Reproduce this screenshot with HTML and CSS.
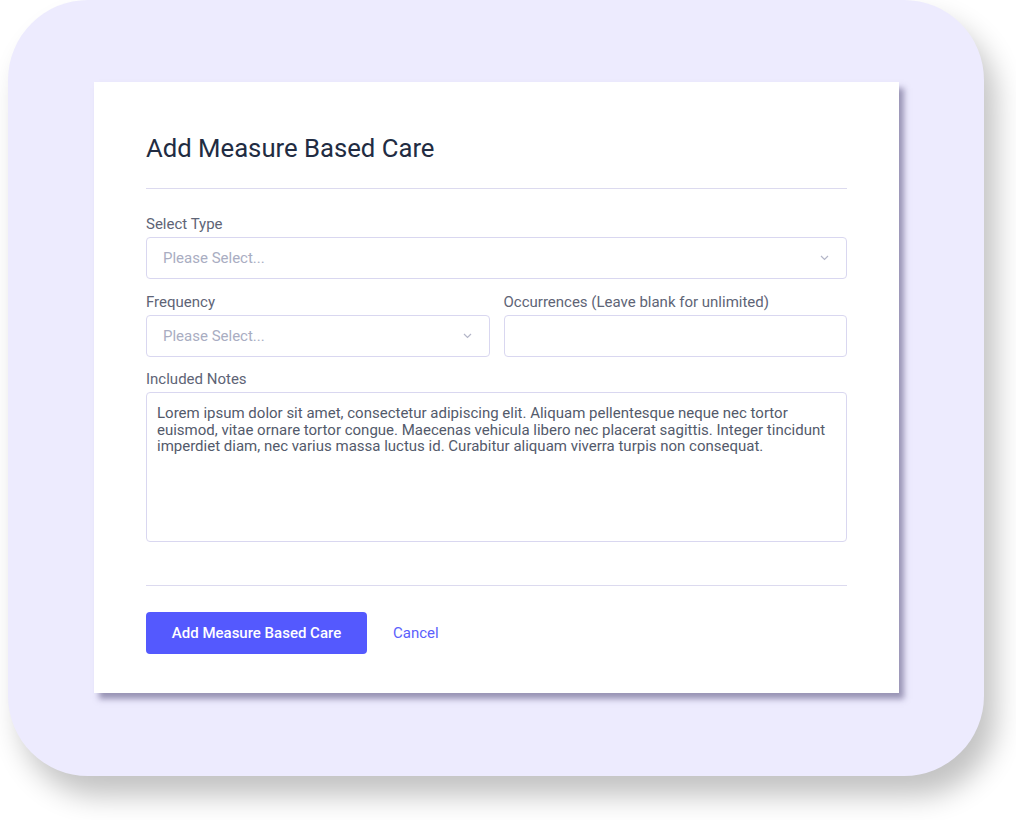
FILE: index.html
```html
<!DOCTYPE html>
<html lang="en">
<head>
<meta charset="utf-8">
<title>Add Measure Based Care</title>
<link rel="stylesheet" href="styles.css">
</head>
<body>
<div class="frame">
  <div class="card">
    <h1 class="title">Add Measure Based Care</h1>
    <hr class="divider">
    <div class="field field-first">
      <label class="label">Select Type</label>
      <div class="select">
        <span class="placeholder">Please Select...</span>
        <svg class="chev" width="9" height="6" viewBox="0 0 9 6"><path d="M1 1l3.5 3.5L8 1" fill="none" stroke="#b4b6c8" stroke-width="1.2"/></svg>
      </div>
    </div>
    <div class="row">
      <div class="field">
        <label class="label">Frequency</label>
        <div class="select">
          <span class="placeholder">Please Select...</span>
          <svg class="chev" width="9" height="6" viewBox="0 0 9 6"><path d="M1 1l3.5 3.5L8 1" fill="none" stroke="#b4b6c8" stroke-width="1.2"/></svg>
        </div>
      </div>
      <div class="field">
        <label class="label">Occurrences (Leave blank for unlimited)</label>
        <div class="input"></div>
      </div>
    </div>
    <div class="field field-notes">
      <label class="label">Included Notes</label>
      <div class="textarea">Lorem ipsum dolor sit amet, consectetur adipiscing elit. Aliquam pellentesque neque nec tortor euismod, vitae ornare tortor congue. Maecenas vehicula libero nec placerat sagittis. Integer tincidunt imperdiet diam, nec varius massa luctus id. Curabitur aliquam viverra turpis non consequat.</div>
    </div>
    <hr class="divider divider-bottom">
    <div class="actions">
      <button class="btn-primary">Add Measure Based Care</button>
      <a class="btn-link">Cancel</a>
    </div>
  </div>
</div>
</body>
</html>
```
FILE: styles.css
```css
* { box-sizing: border-box; }
html, body { margin: 0; padding: 0; background: #ffffff; }
body {
  font-family: Roboto, "Liberation Sans", sans-serif;
  width: 1016px;
  height: 820px;
  overflow: hidden;
}
.frame {
  margin-left: 8px;
  width: 976px;
  height: 776px;
  background: #edebfe;
  border-radius: 80px;
  box-shadow: 12px 20px 28px rgba(0, 0, 0, 0.24);
  padding-top: 82px;
  padding-left: 86px;
}
.card {
  width: 805px;
  height: 611px;
  background: #ffffff;
  box-shadow: 5px 6px 6px rgba(70, 62, 110, 0.5);
  padding: 50px 52px 0 52px;
  display: flex;
  flex-direction: column;
}
.title {
  margin: 0;
  font-size: 25.7px;
  line-height: 32px;
  font-weight: 400;
  color: #222c42;
  height: 32px;
}
.divider {
  margin: 24px 0 0 0;
  border: 0;
  border-top: 1px solid #dcdaef;
  height: 0;
  flex: none;
}
.field {
  display: flex;
  flex-direction: column;
  flex: none;
}
.row .field { flex: 1; min-width: 0; }
.field-first { margin-top: 25px; }
.label {
  font-size: 15px;
  line-height: 20px;
  color: #5e6476;
  margin-bottom: 3px;
}
.select, .input {
  height: 42px;
  border: 1px solid #d9d7f0;
  border-radius: 4px;
  display: flex;
  align-items: center;
  justify-content: space-between;
  padding: 0 17px 0 16px;
}
.placeholder {
  font-size: 15px;
  color: #a9adc2;
}
.chev { display: block; }
.row {
  display: flex;
  gap: 14px;
  margin-top: 13px;
  flex: none;
}
.field-notes { margin-top: 12px; }
.textarea {
  height: 150px;
  border: 1px solid #d9d7f0;
  border-radius: 4px;
  padding: 12px 10px;
  font-size: 15px;
  line-height: 16.5px;
  color: #535a6b;
}
.divider-bottom { margin-top: 43px; }
.actions {
  display: flex;
  align-items: center;
  margin-top: 26px;
  flex: none;
}
.btn-primary {
  height: 42px;
  width: 221px;
  border: 0;
  border-radius: 4px;
  background: #5459fe;
  color: #ffffff;
  font-family: Roboto, "Liberation Sans", sans-serif;
  font-size: 15px;
  font-weight: 500;
  padding: 0;
}
.btn-link {
  margin-left: 26px;
  font-size: 15px;
  color: #5b60fc;
}
```
